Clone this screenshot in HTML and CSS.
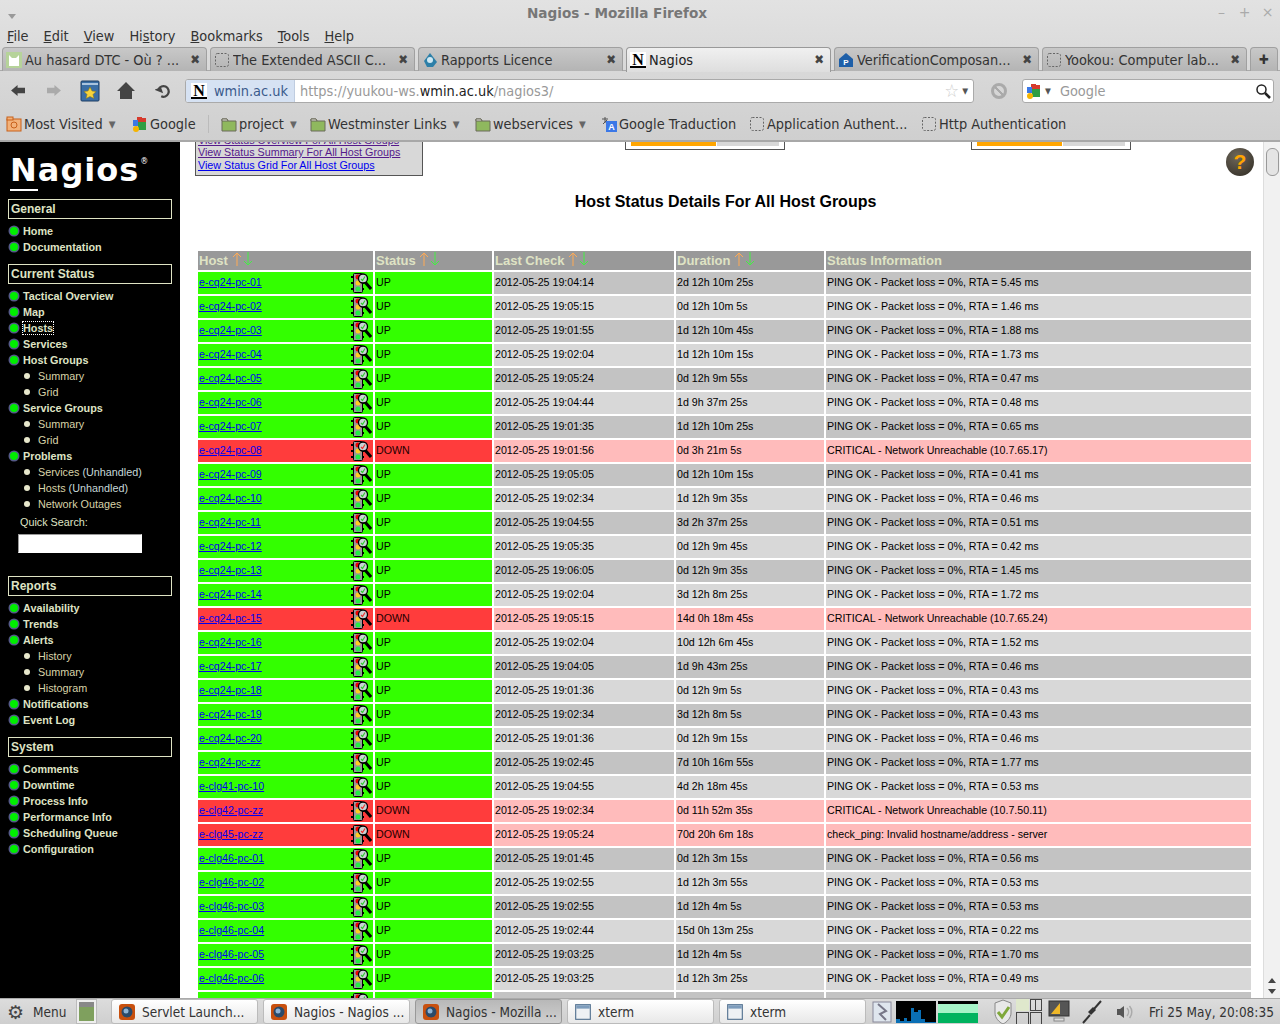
FILE: index.html
```html
<!DOCTYPE html>
<html lang="en">
<head>
  <meta charset="UTF-8" />
  <title>Nagios - Mozilla Firefox</title>
  <link rel="stylesheet" href="styles.css">
</head>
<body>
  <svg class="defs" width="0" height="0">
    <symbol id="blank" viewBox="0 0 16 16"><rect x="1.5" y="1.5" width="13" height="13" rx="2" fill="none" stroke="#666" stroke-dasharray="2 1.5"/></symbol>
    <symbol id="folder" viewBox="0 0 16 16"><path d="M1 3h5l1 2h8v10H1z" fill="#8fb85e" stroke="#6a6a5a"/><path d="M1 3h5l1 2H1z" fill="#e8e8e0" stroke="#6a6a5a"/></symbol>
    <symbol id="gicon" viewBox="0 0 16 16"><rect x="5" y="1" width="5" height="5" fill="#d63a2c"/><rect x="1" y="4" width="5" height="6" fill="#3b78e7"/><rect x="6" y="6" width="8" height="8" fill="#2f9e44"/><circle cx="4" cy="13" r="3" fill="#f5b400"/><rect x="10" y="2" width="4" height="4" fill="#d63a2c"/></symbol>
    <symbol id="firefox" viewBox="0 0 18 18"><rect x="1" y="1" width="16" height="16" rx="3" fill="#c8500e"/><circle cx="9" cy="9" r="5.5" fill="#2a4a6a"/><circle cx="8" cy="8" r="2.5" fill="#8fb4d6"/></symbol>
    <symbol id="xterm" viewBox="0 0 16 16"><rect x="1.5" y="1.5" width="13" height="13" fill="#eef1f4" stroke="#51708f"/><rect x="2" y="2" width="12" height="3" fill="#7d9cbc"/></symbol>
    <symbol id="sort-up" viewBox="0 0 10 14"><path d="M5 14V1M1 5l4-4 4 4" fill="none" stroke="#ffaa55"/></symbol>
    <symbol id="sort-dn" viewBox="0 0 10 14"><path d="M5 0v13M1 9l4 4 4-4" fill="none" stroke="#44ee44"/></symbol>
    <symbol id="light" viewBox="0 0 22 22">
      <path d="M1 5h3M1 11h3M1 17h3M12 11h2M12 17h2" stroke="#000" stroke-width="2"/>
      <rect x="3.500" y="1.500" width="9" height="19" rx="1" fill="#999" stroke="#000"/>
      <circle cx="8" cy="5" r="2.500" fill="#e00"/>
      <circle cx="8" cy="11" r="2.500" fill="#fc2"/>
      <circle cx="8" cy="17" r="2.500" fill="#2e4"/>
      <path d="M15 10l6 7" stroke="#000" stroke-width="3"/>
      <circle cx="13" cy="6.500" r="4.500" fill="#c9d4d4" stroke="#000" stroke-width="1.300"/>
      <path d="M11 7l1.500 1.500 2.500-4" stroke="currentColor" stroke-width="1.200" fill="none"/>
    </symbol>
  </svg>

  <header class="chrome">
    <div class="titlebar">
      <span class="wm-menu"></span>
      <span class="title">Nagios - Mozilla Firefox</span>
      <span class="wm-btns"><span>&#8211;</span><span>+</span><span>&#215;</span></span>
    </div>
    <div class="menubar">
      <span><u>F</u>ile</span><span><u>E</u>dit</span><span><u>V</u>iew</span><span>Hi<u>s</u>tory</span><span><u>B</u>ookmarks</span><span><u>T</u>ools</span><span><u>H</u>elp</span>
    </div>
    <div class="tabs">
      <div class="tab"><svg class="fav" viewBox="0 0 16 16"><rect width="16" height="16" fill="#b6d39a"/><path d="M3 14V3l3 3h4l3-3v11z" fill="#fff"/></svg><span class="tab-label">Au hasard DTC - O&ugrave; ? ...</span><b class="x">&#10006;</b></div>
      <div class="tab"><svg class="fav"><use href="#blank"/></svg><span class="tab-label">The Extended ASCII C...</span><b class="x">&#10006;</b></div>
      <div class="tab"><svg class="fav" viewBox="0 0 16 16"><path d="M8 1l7 9-4 5H5L2 9z" fill="#2c7fa8"/><circle cx="8" cy="8" r="3" fill="#cfe8f2"/></svg><span class="tab-label">Rapports Licence</span><b class="x">&#10006;</b></div>
      <div class="tab active"><span class="n-fav">N</span><span class="tab-label">Nagios</span><b class="x">&#10006;</b></div>
      <div class="tab"><svg class="fav" viewBox="0 0 16 16"><path d="M8 1l7 6v8H1V7z" fill="#1e5fa8"/><text x="8" y="13" font-size="8" font-weight="bold" fill="#fff" text-anchor="middle" font-family="Liberation Sans">P</text></svg><span class="tab-label">VerificationComposan...</span><b class="x">&#10006;</b></div>
      <div class="tab"><svg class="fav"><use href="#blank"/></svg><span class="tab-label">Yookou: Computer lab...</span><b class="x">&#10006;</b></div>
      <div class="tab tab-new"><b>&#10010;</b></div>
    </div>
    <div class="navbar">
      <svg class="nav-ic" viewBox="0 0 16 14"><path d="M0 7l7-6v3h8v6H7v3z" fill="#444"/></svg>
      <svg class="nav-ic fwd" viewBox="0 0 16 14"><path d="M16 7L9 1v3H1v6h8v3z" fill="#aaa"/></svg>
      <svg class="book" viewBox="0 0 20 22"><rect x="1" y="1" width="18" height="20" rx="1" fill="#3a6ea5" stroke="#1d3d63"/><rect x="2" y="3" width="16" height="2" fill="#a9c3dd"/><path d="M10 7l2 4 4 .5-3 3 1 4-4-2-4 2 1-4-3-3 4-.5z" fill="#f5d33b" stroke="#8a7412" stroke-width=".5"/></svg>
      <svg class="home" viewBox="0 0 20 20"><path d="M10 1L1 10h3v8h12v-8h3z" fill="#444"/></svg>
      <svg class="reload" viewBox="0 0 18 18"><path d="M4 7a6 6 0 1 1 3 8" fill="none" stroke="#444" stroke-width="2.500"/><path d="M0 6h8v7z" fill="#444" transform="rotate(-20 4 9)"/></svg>
      <div class="urlbar">
        <span class="site"><span class="n-fav">N</span>wmin.ac.uk</span>
        <span class="url">https://yuukou-ws.<em>wmin.ac.uk</em>/nagios3/</span>
        <span class="star">&#9734;</span><span class="drop">&#9662;</span>
      </div>
      <span class="stop"></span>
      <div class="searchbar">
        <svg class="fav"><use href="#gicon"/></svg><span class="drop">&#9662;</span>
        <span class="search-ph">Google</span>
        <svg class="lens" viewBox="0 0 16 16"><circle cx="6.500" cy="6.500" r="4.500" fill="none" stroke="#222" stroke-width="1.500"/><path d="M10 10l5 5" stroke="#222" stroke-width="2.500"/></svg>
      </div>
    </div>
    <div class="bookmarks">
      <span class="bm bm-visited"><svg class="fav" viewBox="0 0 16 16"><rect x="1" y="3" width="14" height="12" fill="#f3b27a" stroke="#c8601a"/><rect x="1" y="1" width="6" height="3" fill="#f3b27a" stroke="#c8601a"/><circle cx="8" cy="9" r="3" fill="none" stroke="#c8601a"/></svg>Most Visited<i>&#9662;</i></span>
      <span class="bm bm-google"><svg class="fav"><use href="#gicon"/></svg>Google</span>
      <span class="bm-sep"></span>
      <span class="bm bm-project"><svg class="fav"><use href="#folder"/></svg>project<i>&#9662;</i></span>
      <span class="bm bm-west"><svg class="fav"><use href="#folder"/></svg>Westminster Links<i>&#9662;</i></span>
      <span class="bm bm-ws"><svg class="fav"><use href="#folder"/></svg>webservices<i>&#9662;</i></span>
      <span class="bm bm-trad"><svg class="fav" viewBox="0 0 16 16"><rect x="5" y="5" width="11" height="11" fill="#3b78e7"/><text x="10.500" y="14" font-size="9" font-weight="bold" fill="#fff" text-anchor="middle" font-family="Liberation Sans">A</text><path d="M1 3h6M4 1v6M2 8l4-4" stroke="#555"/></svg>Google Traduction</span>
      <span class="bm bm-app"><svg class="fav"><use href="#blank"/></svg>Application Authent...</span>
      <span class="bm"><svg class="fav"><use href="#blank"/></svg>Http Authentication</span>
    </div>
  </header>

  <div class="main">
    <aside class="side">
      <div class="logo"><span class="logo-n">N</span>agios<sup>&reg;</sup></div>

      <h3>General</h3>
      <ul>
        <li>Home</li>
        <li>Documentation</li>
      </ul>

      <h3>Current Status</h3>
      <ul>
        <li>Tactical Overview</li>
        <li>Map</li>
        <li class="focus"><span>Hosts</span></li>
        <li>Services</li>
        <li>Host Groups</li>
        <li class="sub">Summary</li>
        <li class="sub">Grid</li>
        <li>Service Groups</li>
        <li class="sub">Summary</li>
        <li class="sub">Grid</li>
        <li>Problems</li>
        <li class="sub">Services <span class="unh">(Unhandled)</span></li>
        <li class="sub">Hosts <span class="unh">(Unhandled)</span></li>
        <li class="sub">Network Outages</li>
      </ul>
      <div class="quick">Quick Search:</div>
      <input class="quick-in" type="text">

      <h3 class="h-reports">Reports</h3>
      <ul>
        <li>Availability</li>
        <li>Trends</li>
        <li>Alerts</li>
        <li class="sub">History</li>
        <li class="sub">Summary</li>
        <li class="sub">Histogram</li>
        <li>Notifications</li>
        <li>Event Log</li>
      </ul>

      <h3>System</h3>
      <ul>
        <li>Comments</li>
        <li>Downtime</li>
        <li>Process Info</li>
        <li>Performance Info</li>
        <li>Scheduling Queue</li>
        <li>Configuration</li>
      </ul>
    </aside>

    <main class="content">
      <div class="top">
        <div class="linkbox">
          <a href="#">View Service Status Detail For All Host Groups</a>
          <a href="#">View Status Overview For All Host Groups</a>
          <a class="seen" href="#">View Status Overview For All Host Groups</a>
          <a class="seen" href="#">View Status Summary For All Host Groups</a>
          <a href="#">View Status Grid For All Host Groups</a>
        </div>
        <div class="statbox"><span class="bar-o"></span><span class="bar-g"></span></div>
        <div class="statbox second"><span class="bar-o"></span><span class="bar-g"></span></div>
        <div class="help">?</div>
      </div>

      <h1>Host Status Details For All Host Groups</h1>

      <table class="hosts">
        <thead>
          <tr>
            <th class="c1">Host <svg class="sort"><use href="#sort-up"/></svg><svg class="sort"><use href="#sort-dn"/></svg></th>
            <th class="c2">Status <svg class="sort"><use href="#sort-up"/></svg><svg class="sort"><use href="#sort-dn"/></svg></th>
            <th class="c3">Last Check <svg class="sort"><use href="#sort-up"/></svg><svg class="sort"><use href="#sort-dn"/></svg></th>
            <th class="c4">Duration <svg class="sort"><use href="#sort-up"/></svg><svg class="sort"><use href="#sort-dn"/></svg></th>
            <th class="c5">Status Information</th>
          </tr>
        </thead>
        <tbody id="rows"></tbody>
      </table>
    </main>

    <div class="scrollbar">
      <span class="thumb"></span>
      <span class="arrows"><i class="a-up"></i><i class="a-dn"></i></span>
    </div>
  </div>

  <footer class="panel">
    <span class="menu-btn"><span class="gear">&#9881;</span>Menu</span>
    <span class="desk"><i></i></span>
    <span class="task"><svg class="ti"><use href="#firefox"/></svg>Servlet Launch...</span>
    <span class="task"><svg class="ti"><use href="#firefox"/></svg>Nagios - Nagios ...</span>
    <span class="task on"><svg class="ti"><use href="#firefox"/></svg>Nagios - Mozilla ...</span>
    <span class="task"><svg class="ti"><use href="#xterm"/></svg>xterm</span>
    <span class="task"><svg class="ti"><use href="#xterm"/></svg>xterm</span>
    <svg class="tray-win" viewBox="0 0 20 22"><rect x="1" y="1" width="18" height="20" fill="#dfe6ee" stroke="#889"/><path d="M6 3l8 7-6 3 6 6" fill="none" stroke="#778" stroke-width="2"/></svg>
    <svg class="graph" viewBox="0 0 40 22"><rect width="40" height="22" fill="#000"/><path d="M0 22v-4h4v2h4v-3h3v3h4V7h3V11h4v-2h3v9h4v3h11v1z" fill="#0a6fb5"/></svg>
    <svg class="graph g2" viewBox="0 0 40 22"><rect width="40" height="22" fill="#000"/><rect y="3" width="40" height="10" fill="#a6f3c8"/><rect y="12" width="40" height="10" fill="#00b35f"/></svg>
    <svg class="shield" viewBox="0 0 20 26"><path d="M10 1l8 3v10c0 5-4 9-8 11-4-2-8-6-8-11V4z" fill="#e8e8e8" stroke="#888"/><path d="M5 13l4 5 7-10" fill="none" stroke="#7fa83a" stroke-width="3"/></svg>
    <span class="pager"><i class="p1"></i><i class="p2"></i><i></i><i></i></span>
    <svg class="monitor" viewBox="0 0 22 24"><rect x="1" y="1" width="20" height="15" fill="#555" stroke="#333"/><path d="M3 14L12 3v11z" fill="#f0b828"/><rect x="6" y="18" width="10" height="3" fill="#ddd" stroke="#888"/></svg>
    <svg class="plug" viewBox="0 0 20 24"><path d="M1 23l7-8M12 9l7-8" stroke="#333" stroke-width="2"/><path d="M6 12l5-5 3 3-5 5z" fill="#333"/></svg>
    <svg class="speaker" viewBox="0 0 20 20"><path d="M2 7h3l4-3v12l-4-3H2z" fill="#555"/><path d="M12 6a6 6 0 0 1 0 8M14.500 4a9 9 0 0 1 0 12" fill="none" stroke="#aaa" stroke-width="1.500"/></svg>
    <span class="clock">Fri 25 May, 20:08:35</span>
  </footer>

  <script>
    const pingRows = [
      ["e-cq24-pc-01", "19:04:14", "2d 12h 10m 25s", "5.45"],
      ["e-cq24-pc-02", "19:05:15", "0d 12h 10m 5s", "1.46"],
      ["e-cq24-pc-03", "19:01:55", "1d 12h 10m 45s", "1.88"],
      ["e-cq24-pc-04", "19:02:04", "1d 12h 10m 15s", "1.73"],
      ["e-cq24-pc-05", "19:05:24", "0d 12h 9m 55s", "0.47"],
      ["e-cq24-pc-06", "19:04:44", "1d 9h 37m 25s", "0.48"],
      ["e-cq24-pc-07", "19:01:35", "1d 12h 10m 25s", "0.65"],
      ["e-cq24-pc-08", "19:01:56", "0d 3h 21m 5s", "CRITICAL - Network Unreachable (10.7.65.17)", 1],
      ["e-cq24-pc-09", "19:05:05", "0d 12h 10m 15s", "0.41"],
      ["e-cq24-pc-10", "19:02:34", "1d 12h 9m 35s", "0.46"],
      ["e-cq24-pc-11", "19:04:55", "3d 2h 37m 25s", "0.51"],
      ["e-cq24-pc-12", "19:05:35", "0d 12h 9m 45s", "0.42"],
      ["e-cq24-pc-13", "19:06:05", "0d 12h 9m 35s", "1.45"],
      ["e-cq24-pc-14", "19:02:04", "3d 12h 8m 25s", "1.72"],
      ["e-cq24-pc-15", "19:05:15", "14d 0h 18m 45s", "CRITICAL - Network Unreachable (10.7.65.24)", 1],
      ["e-cq24-pc-16", "19:02:04", "10d 12h 6m 45s", "1.52"],
      ["e-cq24-pc-17", "19:04:05", "1d 9h 43m 25s", "0.46"],
      ["e-cq24-pc-18", "19:01:36", "0d 12h 9m 5s", "0.43"],
      ["e-cq24-pc-19", "19:02:34", "3d 12h 8m 5s", "0.43"],
      ["e-cq24-pc-20", "19:01:36", "0d 12h 9m 15s", "0.46"],
      ["e-cq24-pc-zz", "19:02:45", "7d 10h 16m 55s", "1.77"],
      ["e-clg41-pc-10", "19:04:55", "4d 2h 18m 45s", "0.53"],
      ["e-clg42-pc-zz", "19:02:34", "0d 11h 52m 35s", "CRITICAL - Network Unreachable (10.7.50.11)", 1],
      ["e-clg45-pc-zz", "19:05:24", "70d 20h 6m 18s", "check_ping: Invalid hostname/address - server", 1],
      ["e-clg46-pc-01", "19:01:45", "0d 12h 3m 15s", "0.56"],
      ["e-clg46-pc-02", "19:02:55", "1d 12h 3m 55s", "0.53"],
      ["e-clg46-pc-03", "19:02:55", "1d 12h 4m 5s", "0.53"],
      ["e-clg46-pc-04", "19:02:44", "15d 0h 13m 25s", "0.22"],
      ["e-clg46-pc-05", "19:03:25", "1d 12h 4m 5s", "1.70"],
      ["e-clg46-pc-06", "19:03:25", "1d 12h 3m 25s", "0.49"],
      ["e-clg46-pc-07", "19:01:54", "1d 12h 3m 35s", "0.51"]
    ];

    const rows = document.getElementById("rows");
    pingRows.forEach((r, i) => {
      const down = r[4] === 1;
      const shade = down ? "bad" : (i % 2 === 0 ? "odd" : "even");
      const info = down ? r[3] : `PING OK - Packet loss = 0%, RTA = ${r[3]} ms`;
      rows.innerHTML += `
        <tr class="${shade}">
          <td class="host ${down ? "is-down" : "is-up"}"><span class="host-in"><a href="#">${r[0]}</a><svg class="tl"><use href="#light"/></svg></span></td>
          <td class="${down ? "is-down" : "is-up"}">${down ? "DOWN" : "UP"}</td>
          <td>2012-05-25 ${r[1]}</td>
          <td>${r[2]}</td>
          <td>${info}</td>
        </tr>`;
    });
  </script>
</body>
</html>
```

FILE: styles.css
```css
* {
  box-sizing: border-box;
}
html, body {
  height: 100%;
}
body {
  margin: 0;
  width: 1280px;
  height: 1024px;
  overflow: hidden;
  display: flex;
  flex-direction: column;
  font-family: "Liberation Sans", Arial, sans-serif;
  background-color: #fff;
}
.defs {
  position: absolute;
}

/* browser chrome */
.chrome {
  height: 142px;
  flex: none;
  background: linear-gradient(#e2e2e2, #cfcfcf);
  border-bottom: 2px solid #a8a8a8;
  font-family: "DejaVu Sans Condensed", "DejaVu Sans", sans-serif;
  font-size: 14.400px;
  color: #333;
}
.titlebar {
  height: 26px;
  display: flex;
  align-items: center;
  justify-content: center;
  padding-right: 46px;
  position: relative;
  font-family: "DejaVu Sans", sans-serif;
  font-weight: bold;
  font-size: 13.600px;
  color: #777;
}
.wm-menu {
  position: absolute;
  left: 8px;
  top: 14px;
  border: 4px solid transparent;
  border-top: 5px solid #999;
}
.wm-btns {
  position: absolute;
  right: 1px;
  top: 4px;
  display: flex;
  gap: 0;
  font-weight: normal;
  color: #aaa;
  font-size: 14px;
}
.wm-btns span {
  width: 23px;
  text-align: center;
}
.menubar {
  height: 19px;
  margin-bottom: 2px;
  display: flex;
  align-items: center;
  gap: 15px;
  padding-left: 7px;
}
.tabs {
  height: 24px;
  display: flex;
  padding-left: 2px;
  gap: 3px;
  border-bottom: 1px solid #aaa;
}
.tab {
  width: 205px;
  height: 24px;
  display: flex;
  align-items: center;
  gap: 3px;
  padding: 0 6px 0 3px;
  background: linear-gradient(#c8c8c8, #b4b4b4);
  border: 1px solid #a0a0a0;
  border-bottom: none;
  border-radius: 4px 4px 0 0;
}
.tab.active {
  background: linear-gradient(#f0f0f0, #dedede);
  border-color: #999;
  height: 25px;
  padding-bottom: 1px;
  color: #222;
}
.tab-new {
  width: 28px;
  justify-content: center;
  padding: 0;
  font-size: 13px;
}
.tab-label {
  flex: 1;
  white-space: nowrap;
  overflow: hidden;
}
.x {
  font-size: 13px;
  color: #444;
}
.fav {
  width: 16px;
  height: 16px;
  flex: none;
}
.n-fav {
  width: 16px;
  height: 16px;
  flex: none;
  background-color: #fff;
  color: #000;
  font-family: "Liberation Serif", serif;
  font-weight: bold;
  font-size: 16px;
  line-height: 15px;
  text-align: center;
  border-bottom: 2px solid #000;
}
.navbar {
  height: 39px;
  display: flex;
  align-items: center;
  padding-left: 11px;
  position: relative;
}
.nav-ic {
  width: 15px;
  height: 13px;
  margin-right: 20px;
  flex: none;
}
.nav-ic.fwd {
  margin-right: 19px;
}
.book {
  width: 20px;
  height: 22px;
  margin-right: 16px;
}
.home {
  width: 20px;
  height: 20px;
  margin-right: 19px;
}
.reload {
  width: 16px;
  height: 16px;
  margin-right: 14px;
}
.urlbar {
  width: 789px;
  height: 24px;
  display: flex;
  align-items: center;
  background-color: #fff;
  border: 1px solid #aaa;
  border-radius: 3px;
  overflow: hidden;
}
.site {
  height: 100%;
  display: flex;
  align-items: center;
  gap: 7px;
  padding: 0 6px 0 5px;
  background-color: #d6e2f3;
  color: #3a5a8c;
  border-right: 1px solid #c0cde0;
}
.url {
  flex: 1;
  padding-left: 5px;
  color: #999;
}
.url em {
  font-style: normal;
  color: #222;
}
.star {
  color: #ccc;
  font-size: 18px;
  margin-right: 3px;
}
.drop {
  color: #555;
  font-size: 13px;
  margin-right: 5px;
}
.stop {
  width: 16px;
  height: 16px;
  margin: 0 15px 0 17px;
  border: 3px solid #aaa;
  border-radius: 50%;
  background: linear-gradient(45deg, transparent 44%, #aaa 44%, #aaa 56%, transparent 56%);
}
.searchbar {
  width: 252px;
  height: 24px;
  display: flex;
  align-items: center;
  gap: 3px;
  padding-left: 3px;
  background-color: #fff;
  border: 1px solid #aaa;
  border-radius: 3px;
}
.search-ph {
  flex: 1;
  color: #999;
  padding-left: 1px;
}
.lens {
  width: 16px;
  height: 16px;
  margin-right: 2px;
}
.bookmarks {
  height: 30px;
  display: flex;
  align-items: center;
  padding: 0 0 2px 6px;
  white-space: nowrap;
}
.bm {
  display: flex;
  align-items: center;
  gap: 2px;
}
.bm i {
  font-style: normal;
  color: #666;
  font-size: 15px;
  margin-left: 4px;
}
.bm-visited { width: 126px; }
.bm-google { width: 76px; }
.bm-sep {
  width: 1px;
  height: 18px;
  background-color: #bbb;
  margin-right: 12px;
}
.bm-project { width: 89px; }
.bm-west { width: 165px; }
.bm-ws { width: 126px; }
.bm-trad { width: 148px; }
.bm-app { width: 172px; }

/* page area */
.main {
  height: 856px;
  flex: none;
  display: flex;
  overflow: hidden;
}
.side {
  width: 180px;
  flex: none;
  background-color: #000;
  color: #dfe3c4;
  font-size: 10.800px;
  padding: 9px 8px 0;
}
.logo {
  height: 44px;
  margin-left: 2px;
  font-family: "DejaVu Sans", sans-serif;
  font-weight: bold;
  font-size: 32px;
  line-height: 38px;
  color: #fff;
  letter-spacing: 1px;
  white-space: nowrap;
}
.logo-n {
  border-bottom: 2px solid #fff;
}
.logo sup {
  font-size: 8px;
  font-weight: normal;
  vertical-align: 17px;
  line-height: 0;
  margin-left: 1px;
}
.side h3 {
  margin: 4px 0 4px;
  height: 20px;
  border: 1px solid #dfe3c4;
  padding-left: 2px;
  font-size: 12px;
  line-height: 18px;
}
.side ul {
  list-style: none;
  margin: 0 0 9px;
  padding: 0;
}
.side li {
  height: 16px;
  line-height: 16px;
  padding-left: 15px;
  font-weight: bold;
  position: relative;
}
.side li::before {
  content: "";
  position: absolute;
  left: 2px;
  top: 4px;
  width: 8px;
  height: 8px;
  border-radius: 50%;
  background-color: #00ee00;
  box-shadow: 0 0 0 1.500px #555a88;
}
.side li.sub {
  padding-left: 30px;
  font-weight: normal;
  color: #d8d3a8;
}
.side li.sub::before {
  left: 16px;
  top: 5px;
  width: 6px;
  height: 6px;
  background-color: #e8e8cc;
  box-shadow: none;
}
.unh {
  color: #c6d8d8;
}
.side li.focus span {
  outline: 1px dotted #fff;
}
.quick {
  margin: -9px 0 0 12px;
  line-height: 16px;
  height: 22px;
  padding-top: 2px;
}
.quick-in {
  display: block;
  width: 124px;
  height: 19px;
  margin-left: 10px;
  padding: 0;
  background-color: #fff;
  border: 1px solid;
  border-color: #999 #fff #fff #999;
}
.h-reports {
  margin-top: 23px !important;
}
.content {
  flex: 1;
  min-width: 0;
  overflow: hidden;
}
.top {
  display: flex;
  align-items: flex-start;
  height: 94px;
  margin-top: -60px;
  padding-left: 15px;
}
.linkbox {
  width: 228px;
  height: 94px;
  padding: 3px 0 4px 2px;
  background-color: #d8d8d8;
  border: 1px solid #555;
  border-top: none;
  font-size: 10.750px;
  line-height: 12.500px;
  display: flex;
  flex-direction: column;
  justify-content: flex-end;
}
.linkbox a {
  color: #0000ee;
}
.linkbox a.seen {
  color: #551a8b;
}
.statbox {
  width: 160px;
  height: 68px;
  margin-left: 202px;
  padding: 0 5px 3px;
  display: flex;
  align-items: flex-end;
  gap: 1px;
  background-color: #fff;
  border: 1px solid #555;
  border-top: none;
}
.statbox.second {
  margin-left: 186px;
}
.bar-o {
  width: 86px;
  height: 4px;
  background-color: #ffa500;
}
.bar-g {
  width: 63px;
  height: 4px;
  background-color: #d8d8d8;
}
.help {
  width: 28px;
  height: 28px;
  margin: 66px 0 0 95px;
  flex: none;
  border-radius: 50%;
  background: radial-gradient(circle at 40% 30%, #6e675a, #2e2a22);
  color: #ffa500;
  font-weight: bold;
  font-size: 21px;
  line-height: 28px;
  text-align: center;
}
h1 {
  margin: 16px 0 0;
  height: 38px;
  padding-left: 8px;
  text-align: center;
  font-size: 16px;
  line-height: 20px;
  color: #000;
}
.hosts {
  table-layout: fixed;
  width: 1057px;
  margin: 19px 0 0 16px;
  border-collapse: separate;
  border-spacing: 2px;
  font-size: 8pt;
}
.hosts th {
  height: 19px;
  padding: 1px 1px 0;
  background-color: #999;
  color: #dfe3c4;
  text-align: left;
  font-size: 13px;
  line-height: 18px;
  white-space: nowrap;
  overflow: hidden;
}
.hosts td {
  height: 22px;
  padding: 0 1px 2px;
  white-space: nowrap;
  color: #000;
}
.c1 { width: 175px; }
.c2 { width: 117px; }
.c3 { width: 180px; }
.c4 { width: 148px; }
.sort {
  width: 10px;
  height: 14px;
  margin-right: 1px;
  vertical-align: -1px;
}
.odd td { background-color: #c3c3c3; }
.even td { background-color: #d8d8d8; }
.bad td { background-color: #ffbbbb; }
.hosts td.is-up {
  background-color: #33ff00;
  color: #000;
}
.hosts td.is-down {
  background-color: #ff3c3c;
  color: #200;
}
.host-in {
  display: flex;
  align-items: center;
  justify-content: space-between;
  height: 20px;
}
.host a {
  color: #0000ee;
}
.tl {
  width: 22px;
  height: 22px;
  flex: none;
  margin-top: 2px;
  color: #3c3;
}
.is-down .tl {
  color: #e33;
}
.scrollbar {
  width: 17px;
  flex: none;
  background-color: #f1f1f1;
  border-left: 1px solid #ddd;
  display: flex;
  flex-direction: column;
  justify-content: space-between;
  align-items: center;
  padding-top: 6px;
}
.thumb {
  width: 13px;
  height: 28px;
  background-color: #e4e4e4;
  border: 1px solid #999;
  border-radius: 6px;
}
.arrows {
  display: flex;
  flex-direction: column;
  gap: 6px;
  padding-bottom: 4px;
}
.a-up {
  border: 4px solid transparent;
  border-top: none;
  border-bottom: 5px solid #444;
}
.a-dn {
  border: 4px solid transparent;
  border-bottom: none;
  border-top: 5px solid #444;
}

/* desktop panel */
.panel {
  height: 26px;
  flex: none;
  display: flex;
  align-items: center;
  background: linear-gradient(#dcdcdc, #cfcfcf);
  border-top: 1px solid #aaa;
  font-family: "DejaVu Sans Condensed", "DejaVu Sans", sans-serif;
  font-size: 13.500px;
  color: #333;
}
.menu-btn {
  width: 76px;
  display: flex;
  align-items: center;
  gap: 9px;
  padding-left: 7px;
}
.gear {
  font-size: 19px;
  line-height: 20px;
  color: #444;
  font-family: "DejaVu Sans", sans-serif;
}
.desk {
  width: 21px;
  height: 25px;
  margin-right: 14px;
  padding: 2px;
  background-color: #eee;
  border: 1px solid #bbb;
}
.desk i {
  display: block;
  height: 100%;
  background: linear-gradient(#888 25%, #7fa05e 25%);
}
.task {
  width: 147px;
  height: 25px;
  margin-right: 5px;
  display: flex;
  align-items: center;
  gap: 6px;
  padding-left: 6px;
  background: linear-gradient(#fff, #e8e8e8);
  border: 1px solid #bbb;
  border-radius: 3px;
  white-space: nowrap;
}
.task.on {
  background: linear-gradient(#b8b8b8, #d0d0d0);
  border-color: #999;
}
.ti {
  width: 18px;
  height: 18px;
  flex: none;
}
.tray-win {
  width: 20px;
  height: 22px;
  margin-left: 1px;
  margin-right: 4px;
  flex: none;
}
.graph {
  width: 40px;
  height: 22px;
  margin-right: 2px;
  flex: none;
}
.shield {
  width: 20px;
  height: 26px;
  margin: 0 3px 0 13px;
  flex: none;
}
.pager {
  width: 26px;
  height: 26px;
  flex: none;
  display: grid;
  grid-template-columns: 1fr 1fr;
  gap: 1px;
}
.pager i {
  border: 1px solid #444;
}
.pager i.p1 {
  background-color: #dfe8cc;
  border: none;
}
.pager i.p2 {
  background: linear-gradient(90deg, transparent 45%, #444 45%, #444 55%, transparent 55%);
}
.monitor {
  width: 22px;
  height: 24px;
  margin-left: 6px;
  flex: none;
}
.plug {
  width: 20px;
  height: 24px;
  margin-left: 12px;
  flex: none;
}
.speaker {
  width: 20px;
  height: 20px;
  margin-left: 13px;
  flex: none;
}
.clock {
  margin-left: 14px;
  white-space: nowrap;
}
```
